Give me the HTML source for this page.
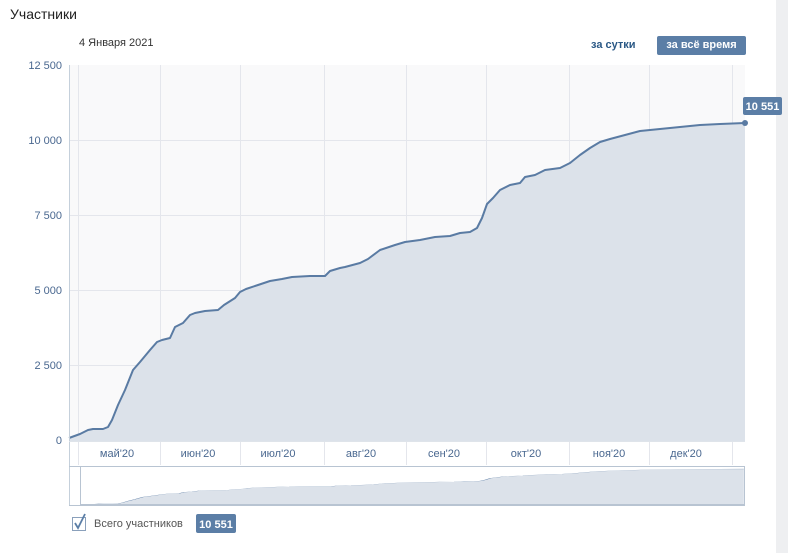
<!DOCTYPE html><html><head><meta charset="utf-8"><style>
body{margin:0;width:788px;height:553px;background:#fff;font-family:"Liberation Sans",sans-serif;position:relative;overflow:hidden}
.t{position:absolute;white-space:nowrap}
</style></head><body>
<div style="position:absolute;left:776px;top:0;width:12px;height:553px;background:#eeeff1"></div>
<div class="t" style="left:10px;top:6px;font-size:14px;color:#222">Участники</div>
<div class="t" style="left:79px;top:37px;font-size:11px;color:#333">4 Января 2021</div>
<div class="t" style="left:591px;top:39px;font-size:11px;font-weight:bold;color:#2a5885">за сутки</div>
<div class="t" style="left:657px;top:36px;width:89px;height:19px;background:#5b7ea6;border-radius:2px;color:#fff;font-size:11px;font-weight:bold;text-align:center;line-height:19px">за всё время</div>
<svg width="788" height="553" style="position:absolute;left:0;top:0">
<rect x="69" y="65" width="676" height="376" fill="#f9f9fa"/>
<g stroke="#e4e6ec" stroke-width="1">
<line x1="69" x2="745" y1="140.5" y2="140.5"/><line x1="69" x2="745" y1="215.5" y2="215.5"/><line x1="69" x2="745" y1="290.5" y2="290.5"/><line x1="69" x2="745" y1="365.5" y2="365.5"/>
<g id="vl"><line x1="78.5" x2="78.5" y1="65" y2="465"/><line x1="160.5" x2="160.5" y1="65" y2="465"/><line x1="240.5" x2="240.5" y1="65" y2="465"/><line x1="324.5" x2="324.5" y1="65" y2="465"/><line x1="406.5" x2="406.5" y1="65" y2="465"/><line x1="486.5" x2="486.5" y1="65" y2="465"/><line x1="569.5" x2="569.5" y1="65" y2="465"/><line x1="649.5" x2="649.5" y1="65" y2="465"/><line x1="732.5" x2="732.5" y1="65" y2="465"/></g>
</g>
<defs><path id="c" d="M69,438 L80,434 88,430 93,429 103,429 108,427 112,420 118,405 125,390 133,370 140,362 150,350 157,342 162,340 170,338 175,327 183,323 190,315 195,313 205,311 218,310 224,305 235,298 240,292 246,289 258,285 270,281 282,279 292,277 310,276 325,276 330,271 340,268 345,267 360,263 368,259 380,250 395,245 405,242 420,240 435,237 450,236 460,233 470,232 477,228 482,218 487,204 493,198 500,190 510,185 520,183 525,177 535,175 545,170 560,168 570,163 580,155 590,148 600,142 610,139 625,135 640,131 660,129 680,127 700,125 720,124 745,123"/></defs>
<path d="M69,438 L80,434 88,430 93,429 103,429 108,427 112,420 118,405 125,390 133,370 140,362 150,350 157,342 162,340 170,338 175,327 183,323 190,315 195,313 205,311 218,310 224,305 235,298 240,292 246,289 258,285 270,281 282,279 292,277 310,276 325,276 330,271 340,268 345,267 360,263 368,259 380,250 395,245 405,242 420,240 435,237 450,236 460,233 470,232 477,228 482,218 487,204 493,198 500,190 510,185 520,183 525,177 535,175 545,170 560,168 570,163 580,155 590,148 600,142 610,139 625,135 640,131 660,129 680,127 700,125 720,124 745,123 L745,441 L69,441Z" fill="#dce2ea"/>
<use href="#c" fill="none" stroke="#5a7ba3" stroke-width="2" stroke-linejoin="round"/>
<circle cx="745" cy="123" r="3" fill="#5a7ba3"/>
<line x1="69.5" y1="65" x2="69.5" y2="505" stroke="#c5d0db"/>
<line x1="69" y1="441.5" x2="745" y2="441.5" stroke="#dfe4ea"/>
<line x1="69" y1="466.5" x2="745" y2="466.5" stroke="#b8c4d2"/>
<rect x="80" y="466" width="665" height="39" fill="#fff"/>
<g transform="translate(80,469) scale(0.982,0.1136) translate(-69,-123)">
<path d="M69,438 L80,434 88,430 93,429 103,429 108,427 112,420 118,405 125,390 133,370 140,362 150,350 157,342 162,340 170,338 175,327 183,323 190,315 195,313 205,311 218,310 224,305 235,298 240,292 246,289 258,285 270,281 282,279 292,277 310,276 325,276 330,271 340,268 345,267 360,263 368,259 380,250 395,245 405,242 420,240 435,237 450,236 460,233 470,232 477,228 482,218 487,204 493,198 500,190 510,185 520,183 525,177 535,175 545,170 560,168 570,163 580,155 590,148 600,142 610,139 625,135 640,131 660,129 680,127 700,125 720,124 745,123 L745,440 L69,440Z" fill="#dce2ea"/>
<use href="#c" fill="none" stroke="#5a7ba3" stroke-width="1.2" vector-effect="non-scaling-stroke"/>
</g>
<rect x="80.5" y="466.5" width="664" height="38" fill="none" stroke="#b8c4d2"/>
<line x1="69" y1="505.5" x2="745" y2="505.5" stroke="#b8c4d2"/>
<g font-size="11" fill="#4a6890" font-family="Liberation Sans,sans-serif" text-anchor="end">
<text x="62" y="69">12 500</text><text x="62" y="144">10 000</text><text x="62" y="219">7 500</text><text x="62" y="294">5 000</text><text x="62" y="369">2 500</text><text x="62" y="444">0</text>
</g>
<g font-size="11" fill="#4a6890" font-family="Liberation Sans,sans-serif" text-anchor="middle">
<text x="117" y="457">май'20</text><text x="198" y="457">июн'20</text><text x="278" y="457">июл'20</text><text x="361" y="457">авг'20</text><text x="444" y="457">сен'20</text><text x="526" y="457">окт'20</text><text x="609" y="457">ноя'20</text><text x="686" y="457">дек'20</text>
</g>
<rect x="743" y="97" width="39" height="18" rx="2" fill="#5b7ea6"/>
<text x="762.5" y="110" font-size="11" font-weight="bold" fill="#fff" text-anchor="middle" font-family="Liberation Sans,sans-serif">10 551</text>
<rect x="72.5" y="517.5" width="13" height="13" fill="#fff" stroke="#8aa0bb"/>
<path d="M75,523 L78,528 L85,514" fill="none" stroke="#5b7ea6" stroke-width="1.8"/>
<text x="94" y="527" font-size="11" fill="#555" font-family="Liberation Sans,sans-serif">Всего участников</text>
<rect x="196" y="514" width="40" height="19" rx="2" fill="#5b7ea6"/>
<text x="216" y="528" font-size="11" font-weight="bold" fill="#fff" text-anchor="middle" font-family="Liberation Sans,sans-serif">10 551</text>
</svg>
</body></html>
